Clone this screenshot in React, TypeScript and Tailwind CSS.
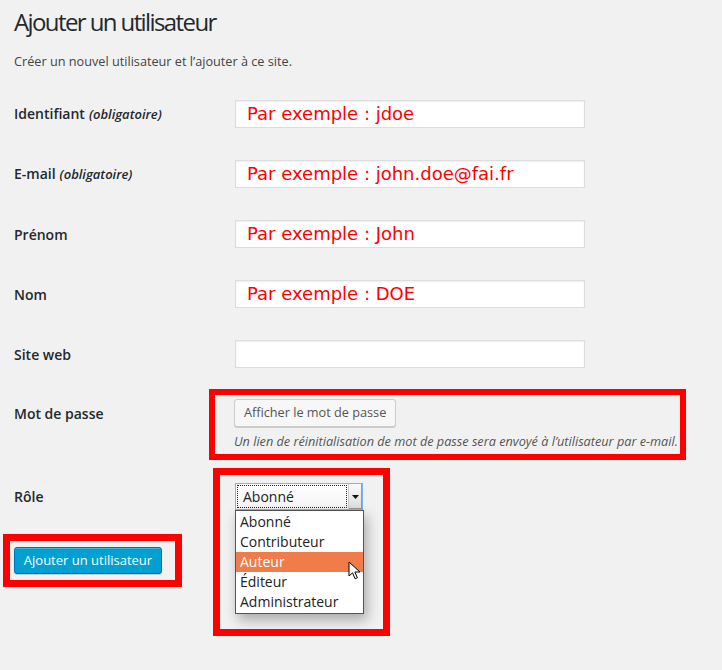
import React from "react";

type Field = {
    id: string
    label: string
    required?: boolean
    value: string
}

const fields: Field[] = [
    { id: 'user_login', label: 'Identifiant', required: true, value: 'Par exemple : jdoe' },
    { id: 'email', label: 'E-mail', required: true, value: 'Par exemple : john.doe@fai.fr' },
    { id: 'first_name', label: 'Prénom', value: 'Par exemple : John' },
    { id: 'last_name', label: 'Nom', value: 'Par exemple : DOE' },
    { id: 'url', label: 'Site web', value: '' },
]

const roles = ['Abonné', 'Contributeur', 'Auteur', 'Éditeur', 'Administrateur']

const App: React.FC = () => {
    return (
        <div className="relative w-full min-h-[670px] bg-[#f1f1f1] px-[14px] text-[#23282d] font-['Open_Sans',sans-serif] overflow-hidden">
            <h1 className="pt-[7px] text-[24px] leading-[29px] tracking-[-1.6px] font-normal">Ajouter un utilisateur</h1>
            <p className="mt-[15px] text-[12.7px] leading-[20px] text-[#444]">Créer un nouvel utilisateur et l’ajouter à ce site.</p>

            <form className="mt-[13px]" onSubmit={(e) => e.preventDefault()}>
                {fields.map((f) => (
                    <div key={f.id} className="flex h-[60px] items-center">
                        <label htmlFor={f.id} className="w-[221px] text-[14px] font-semibold">
                            {f.label}
                            {f.required && <span className="ml-1 text-[13px] italic">(obligatoire)</span>}
                        </label>
                        <input
                            id={f.id}
                            defaultValue={f.value}
                            className="w-[350px] h-[28px] border border-[#ddd] bg-white px-[11px] pb-[1px] text-[18px] text-[#f00] font-['DejaVu_Sans',sans-serif] outline-none shadow-[inset_0_1px_2px_rgba(0,0,0,0.07)]"
                        />
                    </div>
                ))}

                {/* mot de passe */}
                <div className="flex pt-[15px]">
                    <div className="w-[220px] h-[28px] flex items-center text-[14px] font-semibold">Mot de passe</div>
                    <div>
                        <button type="button" className="h-[28px] px-[9px] rounded-[3px] border border-[#ccc] bg-[#f7f7f7] text-[12.7px] text-[#555] shadow-[0_1px_0_#ccc]">
                            Afficher le mot de passe
                        </button>
                        <p className="mt-[4px] text-[12.7px] leading-[20px] italic text-[#555]">
                            Un lien de réinitialisation de mot de passe sera envoyé à l’utilisateur par e-mail.
                        </p>
                    </div>
                </div>

                {/* rôle */}
                <div className="flex pt-[32px]">
                    <div className="w-[221px] h-[27px] flex items-center text-[14px] font-semibold">Rôle</div>
                    <div className="relative w-[128px]">
                        <div className="h-[27px] flex border border-[#7eb4ea] bg-gradient-to-b from-white to-[#f4f4f4]">
                            <div className="flex-1 m-[1px] border border-dotted border-[#222] flex items-center pl-[5px] text-[14px] text-[#222]">Abonné</div>
                            <div className="w-[14px] flex items-center justify-center bg-gradient-to-b from-[#fafafa] to-[#ddd] border-l border-[#ccc] shadow-[inset_-1px_-1px_0_#999]">
                                <svg width="7" height="4" viewBox="0 0 7 4"><path d="M0 0h7L3.5 4z" fill="#111" /></svg>
                            </div>
                        </div>
                        <ul className="absolute left-0 top-full w-[129px] border border-[#555] bg-white py-[1px] shadow-[3px_6px_12px_rgba(0,0,0,0.3)]">
                            {roles.map((r) => (
                                <li key={r} className={`h-[20px] leading-[20px] pl-[4px] text-[14px] ${r === 'Auteur' ? 'bg-[#f07c4a] text-white' : 'text-[#222]'}`}>{r}</li>
                            ))}
                        </ul>
                        {/* curseur */}
                        <svg className="absolute left-[113px] top-[78px]" width="13" height="19" viewBox="0 0 13 19">
                            <path d="M1 1v14l3.5-3.2 2.6 6 2.3-1-2.6-5.8H12z" fill="#fff" stroke="#000" strokeWidth="1" strokeLinejoin="round" />
                        </svg>
                    </div>
                </div>

                <button type="submit" className="mt-[37px] h-[27px] w-[148px] rounded-[3px] border border-[#0073aa] bg-[#00a0d2] text-[13px] text-white shadow-[inset_0_1px_0_rgba(120,200,230,0.5),0_1px_0_rgba(0,0,0,0.15)]">
                    Ajouter un utilisateur
                </button>
            </form>

            {/* cadres rouges */}
            <div className="absolute left-[209px] top-[389px] w-[477px] h-[71px] border-[6px] border-[#f00] pointer-events-none" />
            <div className="absolute left-[213px] top-[468px] w-[177px] h-[168px] border-[7px] border-[#f00] pointer-events-none" />
            <div className="absolute left-[3px] top-[534px] w-[179px] h-[53px] border-[7px] border-[#f00] pointer-events-none" />
        </div>
    )
}

export default App;
